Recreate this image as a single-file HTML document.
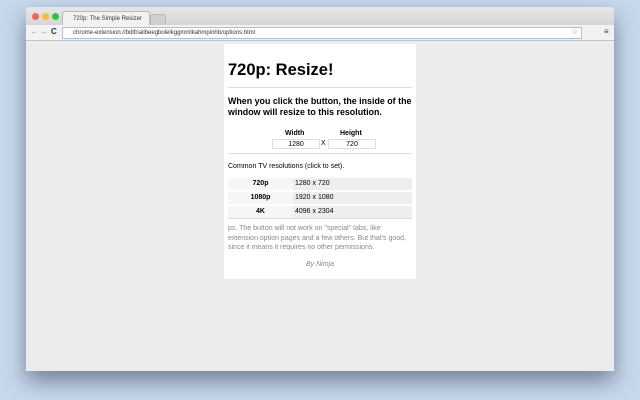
<!DOCTYPE html>
<html><head><style>
*{margin:0;padding:0;box-sizing:border-box}
body{width:640px;height:400px;background:#c9d9ec;font-family:"Liberation Sans",sans-serif;position:relative;overflow:hidden}
.win{position:absolute;left:26px;top:7px;width:588px;height:364px;background:#ececec;box-shadow:0 10px 22px rgba(40,55,80,.55);border-radius:4px 4px 0 0;overflow:hidden}
.tabbar{height:18px;background:linear-gradient(#e6e6e6,#d6d6d6);position:relative}
.dot{position:absolute;top:6px;width:7px;height:7px;border-radius:50%}
.tab{position:absolute;left:36px;top:4px;width:88px;height:14px;background:#f2f2f2;border:1px solid #b8b8b8;border-bottom:none;border-radius:3px 3px 0 0;font-size:6px;color:#333;padding:4px 0 0 10px;white-space:nowrap}
.tab2{position:absolute;left:124px;top:7px;width:16px;height:11px;background:#d0d0d0;border:1px solid #b8b8b8;border-bottom:none;border-radius:3px 3px 0 0}
.toolbar{height:16px;background:#f2f2f2;border-bottom:1px solid #c4c4c4;position:relative}
.url{position:absolute;left:36px;top:2px;width:520px;height:12px;background:#fff;border:1px solid #a9c0e0;font-size:6px;color:#333;padding:2px 0 0 10px}
.ic{position:absolute;top:2px;font-size:8px;color:#999}
.panel{position:absolute;left:198px;top:37px;width:192px;height:235px;background:#fff;padding:0 4px}
h1{font-size:16.5px;font-weight:bold;margin-top:17px;color:#000}
hr{border:none;border-top:1px solid #ddd}
.p1{font-size:8.9px;font-weight:bold;line-height:11px;margin:8px 0 0;color:#000}
.lab{font-size:7px;font-weight:bold;position:absolute}
.inp{position:absolute;height:10px;width:48px;border:1px solid #ddd;font-size:7px;text-align:center;line-height:9px}
.row{display:flex;height:12px;margin-top:2px;font-size:7px;line-height:12px;background:#eee}
.row b{width:65px;text-align:center;background:#f6f6f6;margin-right:2px}
</style></head><body>
<div class="win">
<div class="tabbar">
<div class="dot" style="left:6px;background:#fc5f57"></div>
<div class="dot" style="left:16px;background:#fdbc2e"></div>
<div class="dot" style="left:26px;background:#28c840"></div>
<div class="tab">720p: The Simple Resizer <span style="margin-left:8px;color:#777">×</span></div>
<div class="tab2"></div>
</div>
<div class="toolbar">
<span class="ic" style="left:4px">←</span><span class="ic" style="left:14px">→</span><span class="ic" style="left:25px;color:#333;font-weight:bold">C</span>
<div class="url">chrome-extension://bdlfnailbeegbolelkggmmlkahmpinhb/options.html</div>
<span class="ic" style="left:545px">☆</span><span class="ic" style="left:578px;color:#333">≡</span>
</div>
<div class="panel">
<h1>720p: Resize!</h1>
<hr style="margin-top:7px">
<p class="p1">When you click the button, the inside of the window will resize to this resolution.</p>
<div style="position:relative;height:35px">
<span class="lab" style="left:57px;top:12px">Width</span>
<span class="lab" style="left:112px;top:12px">Height</span>
<div class="inp" style="left:44px;top:21px">1280</div>
<span style="position:absolute;left:93px;top:22px;font-size:7px">X</span>
<div class="inp" style="left:100px;top:21px">720</div>
</div>
<hr>
<p style="font-size:7px;margin-top:9px">Common TV resolutions (click to set).</p>
<div style="margin-top:8px">
<div class="row"><b>720p</b>1280 x 720</div>
<div class="row"><b>1080p</b>1920 x 1080</div>
<div class="row"><b>4K</b>4096 x 2304</div>
</div>
<hr style="margin-top:0">
<p style="font-size:7px;color:#888;line-height:9.5px;margin-top:5px">ps. The button will not work on "special" tabs, like extension option pages and a few others. But that's good, since it means it requires no other permissions.</p>
<p style="font-size:7px;color:#888;font-style:italic;text-align:center;margin-top:8px">By Nimja</p>
</div>
</div>
</body></html>
